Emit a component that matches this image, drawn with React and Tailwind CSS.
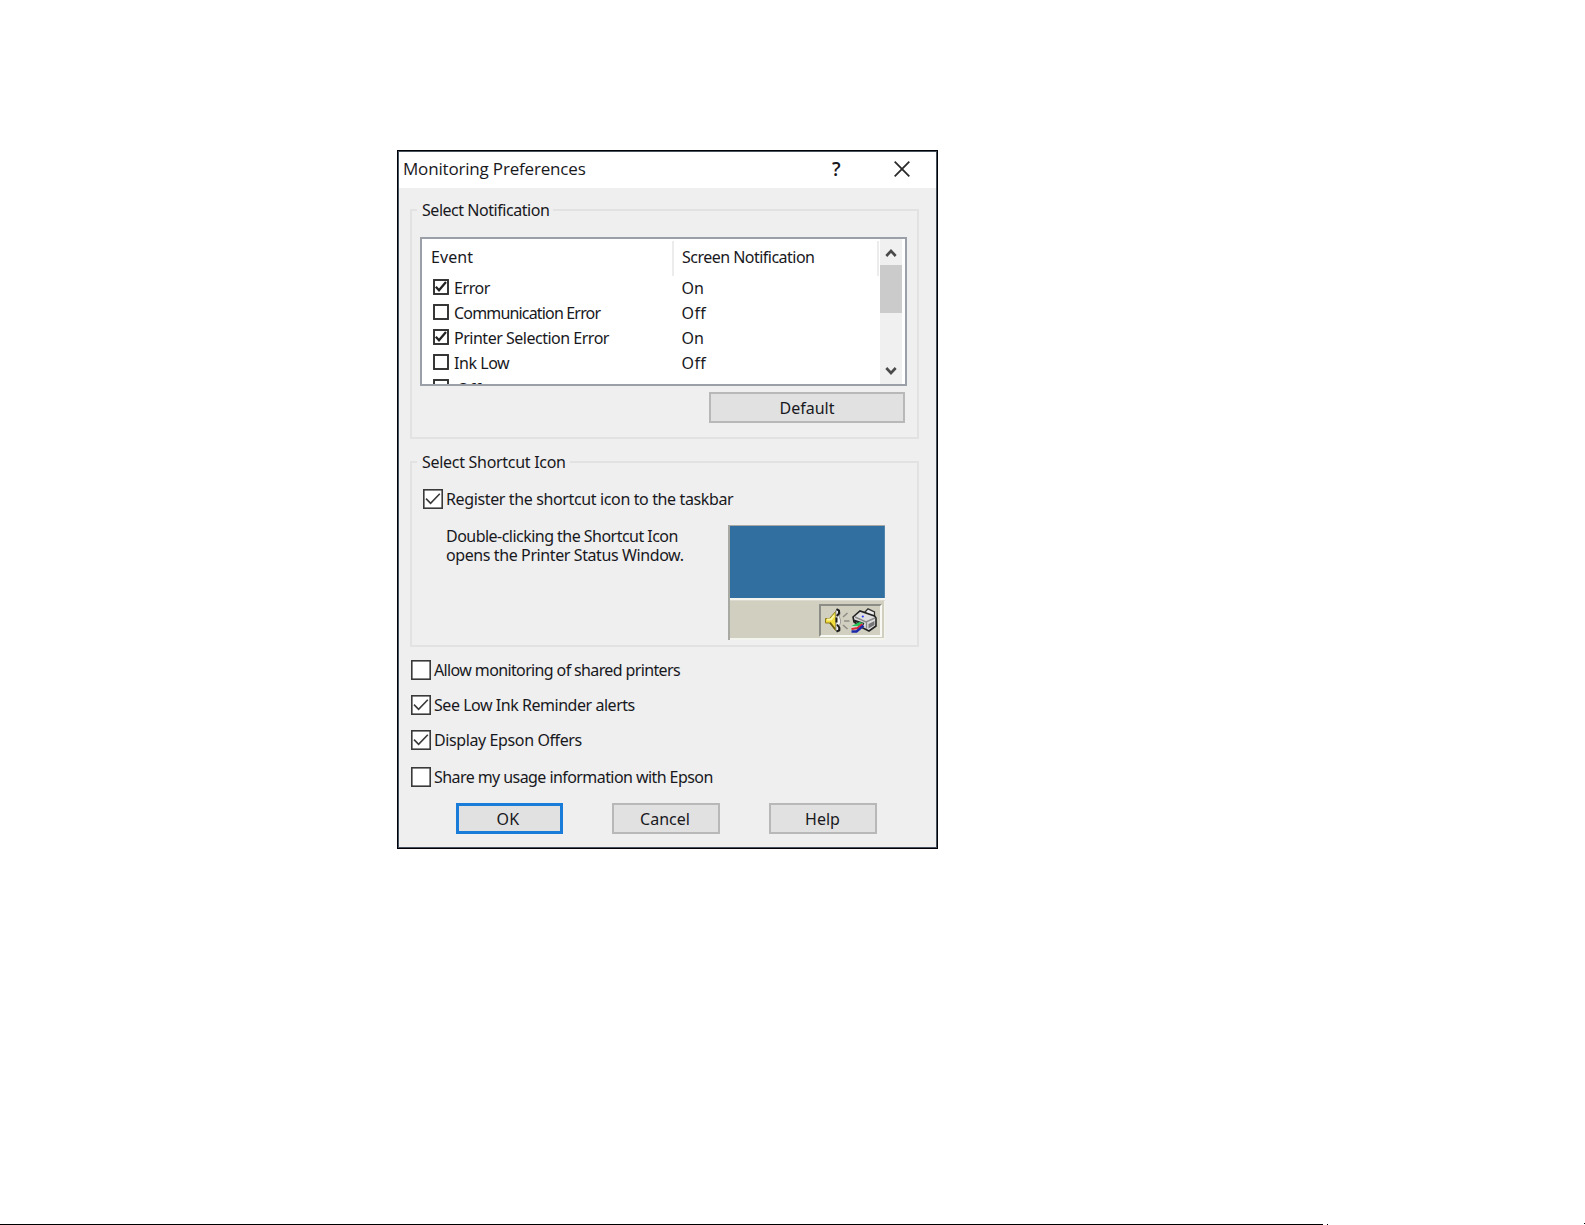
import React, { useState } from 'react';

const EVENTS = [
  { label: 'Error', on: true, status: 'On', tracking: 'tracking-[-0.4px]' },
  { label: 'Communication Error', on: false, status: 'Off', tracking: 'tracking-[-0.83px]' },
  { label: 'Printer Selection Error', on: true, status: 'On', tracking: 'tracking-[-0.49px]' },
  { label: 'Ink Low', on: false, status: 'Off', tracking: 'tracking-[-0.45px]' },
  { label: 'Off', on: false, status: '', tracking: 'pt-px pl-[3px] tracking-[0.3px]' },
];

const OPTIONS = [
  { id: 'shared', label: 'Allow monitoring of shared printers', style: 'mt-[13px] tracking-[-0.63px]' },
  { id: 'lowInk', label: 'See Low Ink Reminder alerts', style: 'mt-[15px] tracking-[-0.46px]' },
  { id: 'offers', label: 'Display Epson Offers', style: 'mt-[15px] tracking-[-0.39px]' },
  { id: 'usage', label: 'Share my usage information with Epson', style: 'mt-[17px] tracking-[-0.57px]' },
];

const CheckBox = ({ checked }) => (
  <span className="w-5 h-5 shrink-0">
    <svg width="20" height="20" viewBox="0 0 20 20" fill="none">
      <rect x="0.8" y="0.8" width="18.4" height="18.4" fill="#fff" stroke="#3a3a3a" strokeWidth="1.6" />
      {checked && <path d="M3 9.6l4.600 4.800 9.200-9.600" stroke="#3a3a3a" strokeWidth="1.6" />}
    </svg>
  </span>
);

const ListCheck = ({ checked }) => (
  <svg width="16" height="16" viewBox="0 0 16 16" fill="none" className="shrink-0">
    <rect x="1" y="1" width="14" height="14" fill="#fff" stroke="#2e2e2e" strokeWidth="1.9" />
    {checked && <path d="M2.800 7.800l3.200 3.400 7-8.200" stroke="#222" strokeWidth="2.3" />}
  </svg>
);

const Button = ({ children, primary, className }) => (
  <button
    className={`flex h-[31px] items-center justify-center bg-[#e1e1e1] ${
      primary ? 'border-[3px] border-[#1a7cd9]' : 'border-2 border-[#b8b8b8]'
    } ${className}`}
  >
    {children}
  </button>
);

const Group = ({ title, titleStyle, className, children }) => (
  <section className={`ml-[11px] w-[509px] border-2 border-[#e2e2e2] ${className}`}>
    <h2 className={`-mt-[11px] ml-[5px] w-fit h-5 bg-[#efefef] pl-[5px] pr-1 leading-5 ${titleStyle}`}>{title}</h2>
    {children}
  </section>
);

const SpeakerIcon = () => (
  <svg width="26" height="26" viewBox="0 0 26 26" fill="none">
    <path d="M0.500 10.500h4L11 3v20L4.500 15h-4z" fill="#f0dc3c" stroke="#8c7a1e" strokeWidth="1" />
    <path d="M2 11.500h4l3-4" stroke="#fdf7a8" strokeWidth="1.8" />
    <path d="M5 14.500l5.500 7" stroke="#6b5a10" strokeWidth="1.4" />
    <path d="M11 2h3l1.500 3-1.500 3 1.500 4v3l-1.500 3 1.500 3-1 2H11z" fill="#f4f4f4" stroke="#8a8a8a" strokeWidth="0.8" />
    <path d="M11.500 1.200l2.500 1.300v3l-2.200 2.500M11.500 9.500v5M12 16.500l2.200 3v2.800l-2.700 1.200" stroke="#1c1c1c" strokeWidth="2" />
    <path d="M18 9l4.500-4M19 13h5.500M18 17l4.500 4" stroke="#8e8e86" strokeWidth="1.6" />
  </svg>
);

const PrinterIcon = () => (
  <svg width="27" height="26" viewBox="0 0 27 26" fill="none">
    <path d="M14 4l3-3.200 6.500 3v5.500l-5 1z" fill="#ececec" stroke="#333" strokeWidth="1.3" />
    <path d="M2 9l7-6 14.500 5 1.500 2v8l-7 5-6-3-9-6z" fill="#dedede" stroke="#222" strokeWidth="1.6" />
    <path d="M4 9l11 5 9-4M15.500 14v7" stroke="#8a8a8a" strokeWidth="1.400" />
    <path d="M17.500 16l6-3v4l-6 3.500z" fill="#777" />
    <path d="M3 12.500l10 3.500" stroke="#222" strokeWidth="2" />
    <path d="M0.500 18l8-4 4 1-4 3.500H0.500z" fill="#27c65c" />
    <path d="M0.500 19h7l4-3" stroke="#fff" strokeWidth="1.200" />
    <path d="M0.500 21l6-1 5-4" stroke="#d92638" strokeWidth="2.200" />
    <path d="M0.500 23.500h5l7-6" stroke="#1c2aa8" strokeWidth="2.400" />
    <circle cx="11.800" cy="8.500" r="1.100" fill="#2435ff" />
  </svg>
);

// Small picture of the desktop corner with the tray area
const TaskbarPreview = () => (
  <div className="w-[157px] h-[115px] border-l-2 border-t border-[#a9a9a4] bg-[#d1cfc0]">
    <div className="h-[72px] bg-[#306f9f] border-r border-[#4d85ad]" />
    <div className="h-[3px] bg-[#f4f4f0] border-b border-[#dcdad0]" />
    <div className="h-[39px] border-b-2 border-r border-[#f4f4ef] pt-[3px] pl-[89px]">
      <div className="flex w-[63px] h-[33px] border-2 border-t-[#8d8d87] border-l-[#8d8d87] border-r-[#f8f8f4] border-b-[#f8f8f4] pl-1 pt-[2px]">
        <SpeakerIcon />
        <PrinterIcon />
      </div>
    </div>
  </div>
);

const Chevron = ({ d }) => (
  <svg width="12" height="10" viewBox="0 0 12 10" fill="none">
    <path d={d} stroke="#4a4a4a" strokeWidth="2.600" />
  </svg>
);

const App = () => {
  const [checks] = useState({ shared: false, lowInk: true, offers: true, usage: false });

  return (
    <div className="flex h-[1225px] w-full flex-col justify-between overflow-hidden bg-white font-['Noto_Sans','Open_Sans',sans-serif] text-[16px] text-[#18181d]">
      <div className="mt-[150px] ml-[397px] h-[699px] w-[541px] border border-[#000008] bg-[#efefef]">
        <div className="h-[697px] border border-[#46535f]">
          <header className="flex h-9 items-center bg-white">
            <h1 className="ml-1 w-[426px] pb-[3px] font-['Open_Sans','Noto_Sans',sans-serif] text-[17px] tracking-[-0.18px]">Monitoring Preferences</h1>
            <span className="w-[65px] pb-px pl-[3px] font-['Open_Sans',sans-serif] text-[19px] font-semibold">?</span>
            <svg width="16" height="16" viewBox="0 0 16 16" fill="none" className="mb-[3px]">
              <path d="M0.700 0.700l14.600 14.600M15.300 0.700L0.700 15.300" stroke="#2a2a2a" strokeWidth="1.800" />
            </svg>
          </header>

          <Group title="Select Notification" titleStyle="tracking-[-0.46px]" className="mt-[21px] h-[230px]">
            <div className="mt-[17px] ml-2 flex h-[149px] w-[487px] overflow-hidden border-2 border-[#9ba0a8] bg-white">
              <div className="w-[458px]">
                <div className="flex h-[37px] w-[458px] pt-[2px] leading-5">
                  <div className="w-[252px] border-r-2 border-[#ececec] pt-[6px] pl-[9px] tracking-[0.1px]">Event</div>
                  <div className="w-[205px] border-r-2 border-[#ececec] pt-[6px] pl-2 tracking-[-0.52px]">Screen Notification</div>
                </div>
                <ul className="pt-[2px]">
                  {EVENTS.map(e => (
                    <li key={e.label} className="flex h-[25px] items-start leading-5">
                      <span className="mt-px ml-[11px] flex"><ListCheck checked={e.on} /></span>
                      <span className={`ml-[5px] w-[227.500px] ${e.tracking}`}>{e.label}</span>
                      <span className={e.on ? '' : 'tracking-[0.4px]'}>{e.status}</span>
                    </li>
                  ))}
                </ul>
              </div>
              <div className="flex w-[22px] flex-col items-center bg-[#f0f0f0]">
                <div className="flex h-[26px] items-center pt-[2px]"><Chevron d="M1.300 8l4.700-5 4.700 5" /></div>
                <div className="h-[48px] w-[22px] bg-[#cbcbcb]" />
                <div className="mt-auto mb-[8px]"><Chevron d="M1.300 2l4.700 5 4.700-5" /></div>
              </div>
            </div>
            <Button className="mt-[6px] ml-[297px] w-[196px]">Default</Button>
          </Group>

          <Group title="Select Shortcut Icon" titleStyle="tracking-[-0.29px]" className="mt-[22px] h-[186px]">
            <div className="mt-[17px] ml-[11px] flex items-center">
              <CheckBox checked />
              <span className="ml-[3px] leading-5 tracking-[-0.37px]">Register the shortcut icon to the taskbar</span>
            </div>
            <div className="ml-8 flex">
              <p className="mt-[18px] w-[284px] pl-[2px] leading-[19px] whitespace-nowrap">
                <span className="block tracking-[-0.53px]">Double-clicking the Shortcut Icon</span>
                <span className="block tracking-[-0.4px]">opens the Printer Status Window.</span>
              </p>
              <div className="mt-4"><TaskbarPreview /></div>
            </div>
          </Group>

          <div className="ml-3">
            {OPTIONS.map(o => (
              <label key={o.id} className={`flex h-5 items-center leading-5 ${o.style}`}>
                <CheckBox checked={checks[o.id]} />
                <span className="ml-[3px]">{o.label}</span>
              </label>
            ))}
          </div>

          <footer className="mt-4 ml-[57px] flex gap-[49px]">
            <Button primary className="w-[107px] pr-[3px] tracking-[0.3px]">OK</Button>
            <Button className="w-[108px] pr-[2px]">Cancel</Button>
            <Button className="w-[108px] pr-px">Help</Button>
          </footer>
        </div>
      </div>

      <div className="flex h-0.5 items-end">
        <div className="h-px w-[1323px] bg-black" />
        <div className="ml-1 h-px w-px bg-black" />
        <div className="ml-auto h-px w-px self-start bg-black" />
      </div>
    </div>
  );
};

export default App;
